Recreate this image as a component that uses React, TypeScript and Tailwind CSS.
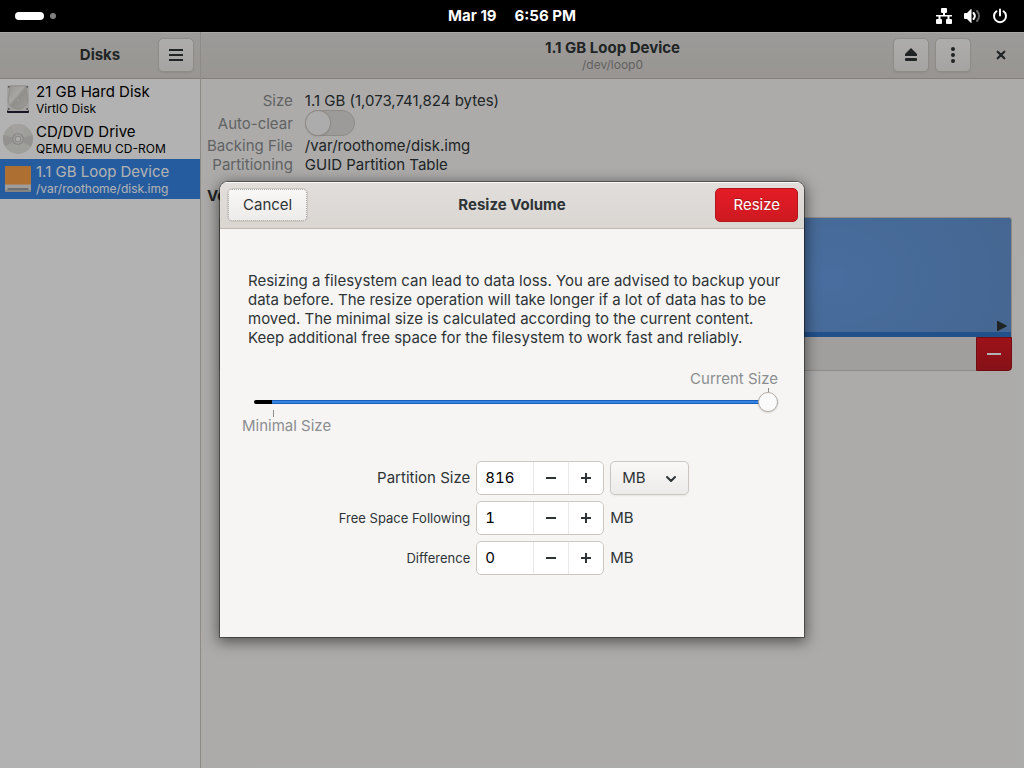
import { useState } from "react";
import type { ReactNode } from "react";

const headerButton =
  "flex h-[34px] w-9 items-center justify-center rounded-[5px] border border-[#cdc7c2] bg-linear-to-b from-[#f9f8f7] to-[#edebe9] shadow-[0_1px_2px_rgba(0,0,0,0.07)]";

function TopBar() {
  return (
    <header className="grid h-8 shrink-0 grid-cols-[1fr_auto_1fr] items-center bg-black text-white">
      <button aria-label="Activities" className="flex items-center gap-1.5 justify-self-start pl-[15px]">
        <span className="h-2 w-[29px] rounded-full bg-white" />
        <span className="size-1.5 rounded-full bg-[#808080]" />
      </button>
      <button className="flex gap-[18px] text-[15px] leading-5 font-bold">
        <span>Mar 19</span>
        <span>6:56 PM</span>
      </button>
      <button aria-label="System menu" className="flex items-center gap-3 justify-self-end pr-4">
        <svg className="size-4" viewBox="0 0 16 16" fill="currentColor">
          <rect x="5" y="0" width="6" height="5" rx="1" />
          <rect x="0" y="11" width="6" height="5" rx="1" />
          <rect x="10" y="11" width="6" height="5" rx="1" />
          <path d="M7 4h2v3h7v1.500h-2.500V11h-2V8.500h-7V11h-2V8.500H0V7h7z" />
        </svg>
        <svg className="size-4" viewBox="0 0 16 16" fill="none" stroke="currentColor" strokeWidth="2">
          <path d="M0 6q0-1 1-1h2l4-4h.500v14H7l-4-4H1q-1 0-1-1z" fill="currentColor" stroke="none" />
          <path d="M9.500 5c1.500 1.700 1.500 4.300 0 6" strokeLinecap="round" />
          <path d="M13 3c2.600 3 2.600 7 0 10" opacity="0.4" strokeLinecap="round" />
        </svg>
        <svg className="size-4" viewBox="0 0 16 16" fill="none" stroke="currentColor" strokeWidth="2" strokeLinecap="round">
          <path d="M4.500 3.300a6 6 0 1 0 7 0" />
          <path d="M8 1.500v6" />
        </svg>
      </button>
    </header>
  );
}

function HardDiskIcon() {
  return (
    <svg className="h-[30px] w-8" viewBox="0 0 32 30">
      <defs>
        <linearGradient id="hd" x1="0" y1="0" x2="1" y2="1">
          <stop offset="0" stopColor="#d6d3ce" />
          <stop offset="0.4" stopColor="#f0efec" />
          <stop offset="0.5" stopColor="#d0cdc7" />
          <stop offset="1" stopColor="#e0ded9" />
        </linearGradient>
      </defs>
      <path d="M5 26h22v2a1 1 0 0 1-1 1H6a1 1 0 0 1-1-1z" fill="#241f31" />
      <rect x="5" y="1" width="22" height="26" rx="1.500" fill="#e9e7e4" />
      <path d="M8 2h16l1.500 11a9.800 9.800 0 1 1-19 0z" fill="url(#hd)" stroke="#c4c0ba" strokeWidth="0.6" />
      <circle cx="16" cy="16" r="1.300" fill="#f6f5f4" stroke="#b8b5b0" strokeWidth="0.5" />
      <g fill="#77767b">
        <circle cx="6.800" cy="2.800" r="0.900" />
        <circle cx="25.200" cy="2.800" r="0.900" />
        <circle cx="6.800" cy="25" r="0.900" />
        <circle cx="25.200" cy="25" r="0.900" />
      </g>
    </svg>
  );
}

function DiscIcon() {
  return (
    <svg className="h-[30px] w-8" viewBox="0 0 32 30">
      <circle cx="16" cy="15" r="15" fill="#e3e2df" />
      <path d="M16 15 1.500 11a15 15 0 0 0 1.500 11.500zM16 15l14.500-4a15 15 0 0 1-1.500 11.500z" fill="#d4d2ce" />
      <path d="M16 15 8 2.300A15 15 0 0 1 24 2.300z" fill="#e8e7e4" />
      <circle cx="16" cy="15" r="6" fill="#c6c4c0" />
      <circle cx="16" cy="15" r="4" fill="none" stroke="#e6e5e2" strokeWidth="1.400" />
      <circle cx="16" cy="15" r="2.300" fill="#f6f5f4" />
    </svg>
  );
}

function LoopIcon() {
  return (
    <svg className="h-[30px] w-8" viewBox="0 0 32 30">
      <path d="M3 3a1 1 0 0 1 1-1h24a1 1 0 0 1 1 1v18H3z" fill="#f9a04a" />
      <path d="M3 20.500h26V27a1 1 0 0 1-1 1H4a1 1 0 0 1-1-1z" fill="#e3e1de" />
      <path d="M3 26v1a1 1 0 0 0 1 1h24a1 1 0 0 0 1-1v-1z" fill="#c0bdb8" />
      <path d="M5.500 25h21" stroke="#5e5c64" strokeWidth="1" />
    </svg>
  );
}

function Device({ icon, name, detail, selected }: { icon: ReactNode; name: string; detail: string; selected?: boolean }) {
  return (
    <li>
      <a
        href="#device"
        className={
          selected
            ? "flex h-10 items-center gap-0.5 bg-[#3584e4] pl-0.5 text-white"
            : "flex h-10 items-center gap-0.5 pl-0.5 text-black"
        }
      >
        {icon}
        <span className="flex flex-col pb-px">
          <span className="text-[15px] leading-[19px]">{name}</span>
          <span className="text-xs leading-[15px]">{detail}</span>
        </span>
      </a>
    </li>
  );
}

function Sidebar() {
  return (
    <aside className="flex w-[201px] shrink-0 flex-col border-r border-[#cdc7c2] bg-white">
      <div className="grid h-[47px] grid-cols-[1fr_auto_1fr] items-center border-b border-[#bfb8b1] bg-linear-to-b from-[#e1dedb] to-[#dad6d2] px-1.5 shadow-[inset_0_1px_rgba(255,255,255,0.6)]">
        <h1 className="col-start-2 text-[15px] leading-5 font-bold">Disks</h1>
        <button aria-label="Main menu" className={headerButton + " justify-self-end"}>
          <svg className="size-4" viewBox="0 0 16 16" fill="currentColor">
            <path d="M1 2h14v2H1zM1 7h14v2H1zM1 12h14v2H1z" />
          </svg>
        </button>
      </div>
      <ul>
        <Device icon={<HardDiskIcon />} name="21 GB Hard Disk" detail="VirtIO Disk" />
        <Device icon={<DiscIcon />} name="CD/DVD Drive" detail="QEMU QEMU CD-ROM" />
        <Device icon={<LoopIcon />} name="1.1 GB Loop Device" detail="/var/roothome/disk.img" selected />
      </ul>
    </aside>
  );
}

function DeviceView() {
  return (
    <main className="flex min-w-0 flex-1 flex-col">
      <div className="grid h-[47px] grid-cols-[1fr_auto_1fr] items-center border-b border-[#bfb8b1] bg-linear-to-b from-[#e1dedb] to-[#dad6d2] px-1.5 shadow-[inset_0_1px_rgba(255,255,255,0.6)]">
        <div className="col-start-2 flex flex-col items-center">
          <h2 className="text-[15px] leading-[18px] font-bold">1.1 GB Loop Device</h2>
          <p className="text-xs leading-[15px] text-[#8b8b89]">/dev/loop0</p>
        </div>
        <div className="flex items-center gap-1.5 justify-self-end">
          <button aria-label="Eject" className={headerButton}>
            <svg className="size-4" viewBox="0 0 16 16" fill="currentColor">
              <path d="M8 1 14 7v1.500a.5.5 0 0 1-.5.5h-11a.5.5 0 0 1-.5-.5V7z" />
              <rect x="2" y="11" width="12" height="3" rx="1" />
            </svg>
          </button>
          <button aria-label="Drive menu" className={headerButton}>
            <svg className="size-4" viewBox="0 0 16 16" fill="currentColor">
              <circle cx="8" cy="2" r="2" />
              <circle cx="8" cy="8" r="2" />
              <circle cx="8" cy="14" r="2" />
            </svg>
          </button>
          <button aria-label="Close" className="ml-[7px] flex size-[34px] items-center justify-center">
            <svg className="size-4" viewBox="0 0 16 16" fill="none" stroke="currentColor" strokeWidth="2.200" strokeLinecap="round">
              <path d="m4.700 4.700 6.600 6.600M11.300 4.700l-6.600 6.600" />
            </svg>
          </button>
        </div>
      </div>
      <div className="flex flex-col pt-3 pr-3 pl-1.5 text-[15px] leading-[19px]">
        <dl className="grid grid-cols-[auto_1fr] gap-x-3">
          <dt className="text-right text-[#8b8e8f]">Size</dt>
          <dd>1.1 GB (1,073,741,824 bytes)</dd>
          <dt className="self-center text-right text-[#8b8e8f]">
            <label htmlFor="auto-clear">Auto-clear</label>
          </dt>
          <dd className="flex">
            <input
              id="auto-clear"
              type="checkbox"
              role="switch"
              className="h-[26px] w-[50px] appearance-none rounded-full border border-[#cdc7c2] bg-[#e1dedb] before:block before:size-6 before:rounded-full before:bg-[#f8f7f6] before:shadow-[0_0_0_1px_#cdc7c2,0_1px_2px_rgba(0,0,0,0.2)] checked:bg-[#3584e4] checked:before:ml-6"
            />
          </dd>
          <dt className="text-right text-[#8b8e8f]">Backing File</dt>
          <dd>/var/roothome/disk.img</dd>
          <dt className="text-right text-[#8b8e8f]">Partitioning</dt>
          <dd>GUID Partition Table</dd>
        </dl>
        <h3 className="pt-3 pb-3 font-bold">Volumes</h3>
        <div className="ml-3 flex flex-col">
          <div className="flex h-[120px] flex-col justify-end rounded-t-[3px] border-t border-r border-l border-[#cdc7c2] bg-[radial-gradient(220px_160px_at_77%_50%,#679de3,#6392ce)]">
            <svg className="mr-1 h-3 w-2.5 self-end" viewBox="0 0 10 12" fill="#2e3436">
              <path d="M0 1.500v9q0 1 1 .5l8.500-4.500q.6-.5 0-1L1 1Q0 .5 0 1.500z" />
            </svg>
            <div className="h-[5px] bg-[#3073c8]" />
          </div>
          <div className="flex h-[34px] justify-end rounded-b-[4px] border border-t-0 border-[#cdc7c2] bg-[#e6e4e1]">
            <button
              aria-label="Delete partition"
              className="-mr-px flex h-[34px] w-9 items-center justify-center rounded-br-[4px] border border-[#a51018] bg-linear-to-b from-[#e01b24] to-[#c01922]"
            >
              <span className="h-0.5 w-3.5 bg-white" />
            </button>
          </div>
        </div>
      </div>
    </main>
  );
}

function SpinRow({ id, label, initial, small, children }: { id: string; label: string; initial: number; small?: boolean; children: ReactNode }) {
  const [value, setValue] = useState(initial);
  return (
    <>
      <label htmlFor={id} className={small ? "text-right text-[13px] leading-5" : "text-right text-[15px] leading-5"}>
        {label}
      </label>
      <div className="flex h-[34px] w-32 overflow-hidden rounded-[5px] border border-[#cdc7c2] bg-white">
        <input
          id={id}
          value={value}
          onChange={(e) => setValue(Number(e.target.value) || 0)}
          className="w-14 min-w-0 pl-2 text-[15px] text-black tabular-nums outline-none"
        />
        <button
          aria-label={"Decrease " + label}
          onClick={() => setValue(value - 1)}
          className="flex w-[35px] items-center justify-center border-l border-[#ebe9e7]"
        >
          <svg className="size-4" viewBox="0 0 16 16" fill="currentColor">
            <path d="M3 7h10v2H3z" />
          </svg>
        </button>
        <button
          aria-label={"Increase " + label}
          onClick={() => setValue(value + 1)}
          className="flex w-[35px] items-center justify-center border-l border-[#ebe9e7]"
        >
          <svg className="size-4" viewBox="0 0 16 16" fill="currentColor">
            <path d="M7 3h2v4h4v2H9v4H7V9H3V7h4z" />
          </svg>
        </button>
      </div>
      {children}
    </>
  );
}

function ResizeDialog() {
  return (
    <div
      role="dialog"
      aria-labelledby="resize-title"
      className="w-full max-w-[584px] overflow-hidden rounded-t-lg bg-[#f6f5f4] shadow-[0_0_0_1px_rgba(0,0,0,0.4),0_3px_14px_2px_rgba(0,0,0,0.5)]"
    >
      <div className="grid h-[47px] grid-cols-[1fr_auto_1fr] items-center border-b border-[#bfb8b1] bg-linear-to-b from-[#e1dedb] to-[#dad6d2] px-1.5 shadow-[inset_0_1px_rgba(255,255,255,0.8)]">
        <button className="ml-px h-[34px] justify-self-start rounded-[5px] border border-[#cdc7c2] bg-linear-to-b from-[#f9f8f7] to-[#edebe9] px-[15px] text-[15px] leading-5 outline-1 -outline-offset-2 outline-[#a5a6a5] outline-dotted">
          Cancel
        </button>
        <h2 id="resize-title" className="text-[15px] leading-5 font-bold">
          Resize Volume
        </h2>
        <button className="h-[34px] justify-self-end rounded-[5px] border border-[#b2161d] bg-linear-to-b from-[#e41c26] to-[#ce1921] px-[17px] text-[15px] leading-5 text-white [text-shadow:0_-1px_rgba(0,0,0,0.3)]">
          Resize
        </button>
      </div>
      <div className="flex flex-col px-[22px] pt-[42px] pb-[62px]">
        <p className="pl-1.5 text-[15px] leading-[19px]">
          Resizing a filesystem can lead to data loss. You are advised to backup your data before. The resize operation
          will take longer if a lot of data has to be moved. The minimal size is calculated according to the current
          content. Keep additional free space for the filesystem to work fast and reliably.
        </p>
        <div className="flex flex-col pt-[23px] pr-1 text-[15px] leading-[18px] text-[#8b8e8f]">
          <span className="self-end">Current Size</span>
          <span className="mr-[9px] h-1 w-px self-end bg-[#8b8e8f]" />
          <input
            type="range"
            aria-label="Partition size"
            min={0}
            max={816}
            defaultValue={816}
            className="ml-3 h-5 appearance-none bg-transparent [&::-webkit-slider-runnable-track]:h-1 [&::-webkit-slider-runnable-track]:rounded-full [&::-webkit-slider-runnable-track]:bg-[linear-gradient(to_right,#000_18px,transparent_18px),linear-gradient(#1b5eb8_25%,#3584e4_25%_75%,#1b5eb8_75%)] [&::-webkit-slider-thumb]:-mt-2 [&::-webkit-slider-thumb]:size-5 [&::-webkit-slider-thumb]:appearance-none [&::-webkit-slider-thumb]:rounded-full [&::-webkit-slider-thumb]:border [&::-webkit-slider-thumb]:border-[#b6ada5] [&::-webkit-slider-thumb]:bg-[#fbfafa] [&::-webkit-slider-thumb]:shadow-[0_1px_2px_rgba(0,0,0,0.15)]"
          />
          <span className="-mt-0.5 ml-[31px] h-[7px] w-px bg-[#8b8e8f]" />
          <span>Minimal Size</span>
        </div>
        <div className="grid grid-cols-[auto_auto_auto] items-center justify-center gap-1.5 pt-[26px] pl-1 text-[15px] leading-5">
          <SpinRow id="partition-size" label="Partition Size" initial={816}>
            <div className="relative">
              <select
                aria-label="Unit"
                className="h-[34px] w-[79px] appearance-none rounded-[5px] border border-[#cdc7c2] bg-linear-to-b from-[#f9f8f7] to-[#edebe9] pl-[11px] shadow-[0_1px_2px_rgba(0,0,0,0.07)]"
              >
                <option>MB</option>
                <option>GB</option>
              </select>
              <svg
                className="pointer-events-none absolute top-[9px] right-[10px] size-4"
                viewBox="0 0 16 16"
                fill="none"
                stroke="currentColor"
                strokeWidth="2"
                strokeLinecap="round"
                strokeLinejoin="round"
              >
                <path d="m4 7 4 4 4-4" />
              </svg>
            </div>
          </SpinRow>
          <SpinRow id="free-space" label="Free Space Following" initial={1} small>
            <span>MB</span>
          </SpinRow>
          <SpinRow id="difference" label="Difference" initial={0} small>
            <span>MB</span>
          </SpinRow>
        </div>
      </div>
    </div>
  );
}

export default function App() {
  return (
    <div className="flex min-h-screen flex-col font-['Inter',sans-serif] text-[#2e3436]">
      <TopBar />
      <div className="relative flex flex-1 bg-[#f6f5f4]">
        <Sidebar />
        <DeviceView />
        <div className="absolute inset-0 flex items-start justify-center bg-black/30 pt-[150px]">
          <ResizeDialog />
        </div>
      </div>
    </div>
  );
}
